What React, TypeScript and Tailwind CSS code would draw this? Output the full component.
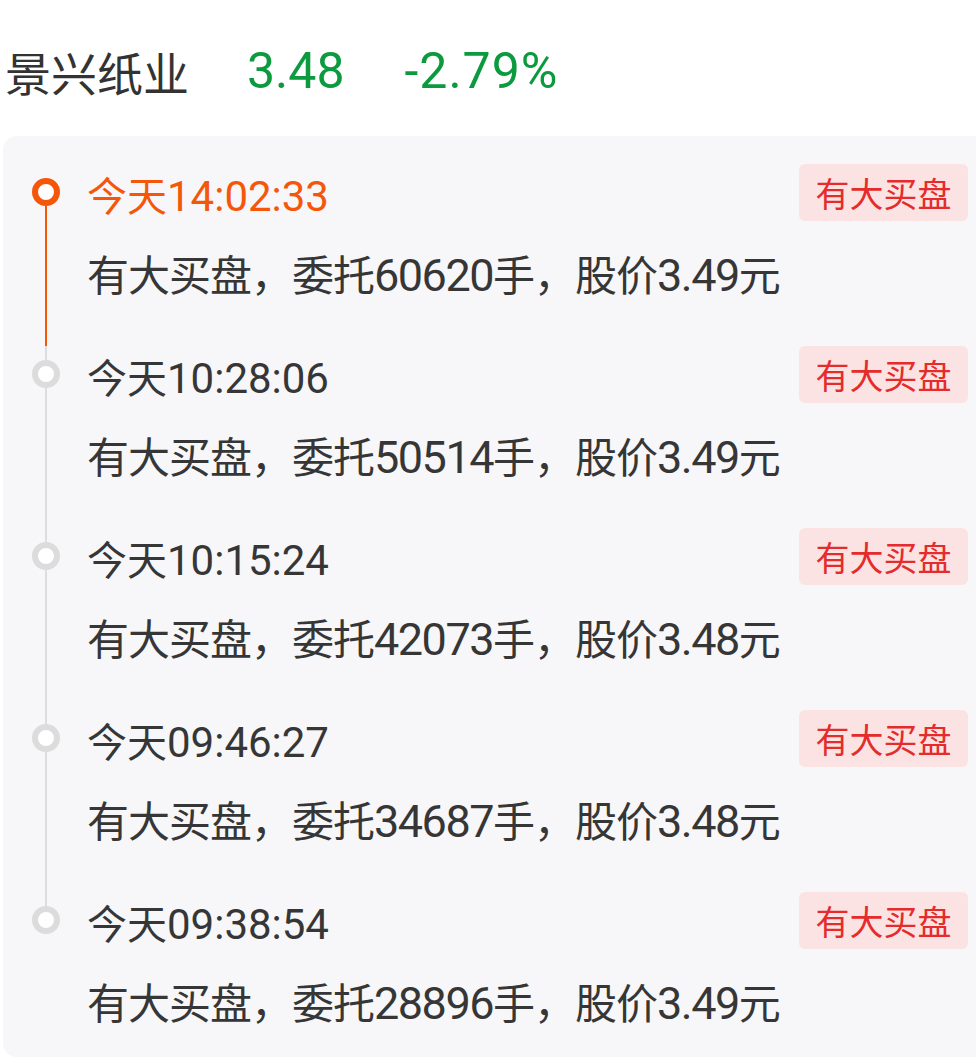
import React from "react";

const items = [
  { time: "今天14:02:33", text: "有大买盘，委托60620手，股价3.49元" },
  { time: "今天10:28:06", text: "有大买盘，委托50514手，股价3.49元" },
  { time: "今天10:15:24", text: "有大买盘，委托42073手，股价3.48元" },
  { time: "今天09:46:27", text: "有大买盘，委托34687手，股价3.48元" },
  { time: "今天09:38:54", text: "有大买盘，委托28896手，股价3.49元" },
];

function Runs({ text, cjk, num }: { text: string; cjk: string; num: string }) {
  const parts = text.split(/([0-9.:]+)/).filter((p) => p.length > 0);
  return (
    <>
      {parts.map((p, i) =>
        /^[0-9.:]+$/.test(p) ? (
          <span key={i} className={num}>
            {p}
          </span>
        ) : (
          <span key={i} className={cjk}>
            {p}
          </span>
        )
      )}
    </>
  );
}

export default function App() {
  return (
    <div className="w-[976px] h-[1060px] overflow-hidden bg-white font-['Roboto','Noto_Sans_CJK_SC',sans-serif]">
      <div className="h-[136px] flex items-center pt-[6px] pl-[5px]">
        <span className="text-[46px] text-[#333333] font-['Noto_Sans_CJK_SC',sans-serif]">景兴纸业</span>
        <span className="ml-[58px] text-[50px] text-[#0c9a3e]">3.48</span>
        <span className="ml-[60px] text-[50px] tracking-[1px] text-[#0c9a3e]">-2.79%</span>
      </div>
      <div className="ml-[3px] w-[1000px] rounded-[14px] bg-[#f7f7f9] pt-[28px] pb-[25px] pl-[29px] pr-[35px]">
        {items.map((it, i) => {
          const first = i === 0;
          const last = i === items.length - 1;
          return (
            <div key={i} className="flex">
              <div className="w-[28px] shrink-0 flex flex-col items-center">
                <div className={`h-[14px] w-[1.5px] ${first ? "bg-transparent" : "bg-[#dddddd]"}`} />
                <div
                  className={`w-[28px] h-[28px] rounded-full border-[6px] bg-white ${
                    first ? "border-[#f5570a]" : "border-[#dcdcdc]"
                  }`}
                />
                <div
                  className={`flex-1 w-[1.5px] ${
                    last ? "bg-transparent" : first ? "bg-[#f5570a]" : "bg-[#dddddd]"
                  }`}
                />
              </div>
              <div className={`flex-1 ml-[27px] ${last ? "" : "pb-[42px]"}`}>
                <div className="flex items-center justify-between h-[57px]">
                  <div className={`h-[57px] mt-[7px] leading-[57px] whitespace-nowrap ${first ? "text-[#f5570a]" : "text-[#363636]"}`}>
                    <Runs text={it.time} cjk="text-[40px]" num="text-[42px]" />
                  </div>
                  <span className="w-[169px] h-[57px] rounded-[6px] bg-[#fbe3e4] text-[#e52b2b] text-[34px] flex items-center justify-center font-['Noto_Sans_CJK_SC',sans-serif]">
                    有大买盘
                  </span>
                </div>
                <div className="mt-[27px] h-[56px] leading-[56px] whitespace-nowrap text-[#363636]">
                  <Runs text={it.text} cjk="text-[42px] tracking-[-1px]" num="text-[45px] tracking-[-1.5px]" />
                </div>
              </div>
            </div>
          );
        })}
      </div>
    </div>
  );
}
